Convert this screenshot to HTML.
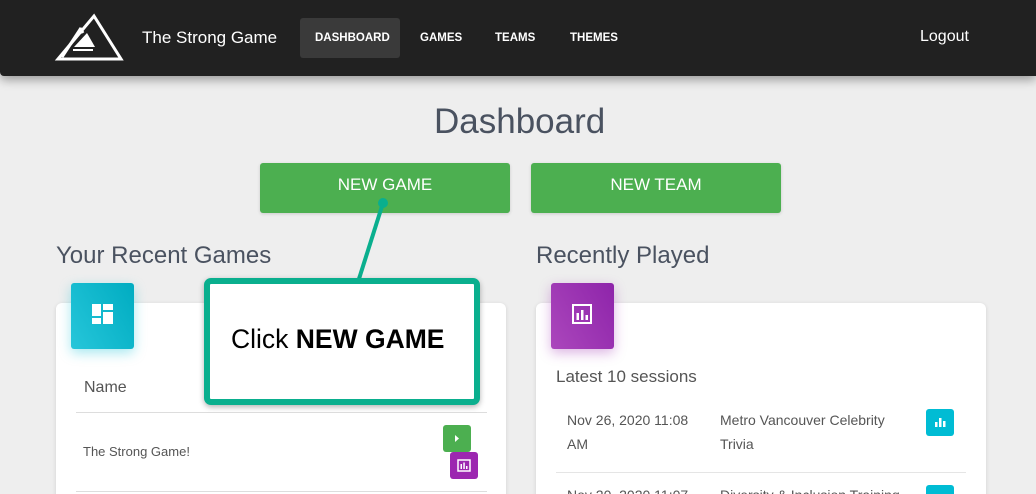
<!DOCTYPE html>
<html><head><meta charset="utf-8"><style>
*{box-sizing:border-box;margin:0;padding:0}
html,body{width:1036px;height:494px;overflow:hidden}
body{background:#eeeeee;font-family:"Liberation Sans",sans-serif;position:relative}
.nav{position:absolute;left:0;top:0;width:1036px;height:76px;background:#212121;box-shadow:0 4px 10px rgba(0,0,0,.35);border-bottom-left-radius:4px}
.nav .t{position:absolute;color:#fff}
.btn{position:absolute;top:163px;width:250px;height:50px;background:#4caf50;border-radius:3px;color:#fff;font-size:17px;text-align:center;line-height:44px;box-shadow:0 1px 3px rgba(0,0,0,.15)}
.h{position:absolute;color:#4a5260;font-size:24px}
.card{position:absolute;top:303px;width:450px;height:200px;background:#fff;border-radius:6px;box-shadow:0 1px 4px rgba(0,0,0,.12)}
.ic{position:absolute;width:63px;height:66px;border-radius:3px}
.sm{position:absolute;width:28px;height:27px;border-radius:3px}
.g{color:#555;position:absolute;font-size:14px;line-height:24px}
</style></head><body>
<div class="nav">
<svg style="position:absolute;left:0;top:0" width="140" height="76">
<polygon points="94,16 121,59 58,59" fill="none" stroke="#fff" stroke-width="3"/>
<line x1="62" y1="57" x2="81" y2="28" stroke="#fff" stroke-width="3"/>
<line x1="80" y1="28" x2="83" y2="33" stroke="#fff" stroke-width="3"/>
<polygon points="87,33 95,47 74,47" fill="#fff"/>
<line x1="73" y1="50" x2="93" y2="50" stroke="#fff" stroke-width="2"/>
</svg>
<div class="t" style="left:142px;top:28px;font-size:17px">The Strong Game</div>
<div style="position:absolute;left:300px;top:18px;width:100px;height:40px;background:#3a3a3a;border-radius:3px"></div>
<div class="t" style="left:315px;top:32px;font-size:11.5px;font-weight:bold">DASHBOARD</div>
<div class="t" style="left:420px;top:32px;font-size:11.5px;font-weight:bold">GAMES</div>
<div class="t" style="left:495px;top:32px;font-size:11.5px;font-weight:bold">TEAMS</div>
<div class="t" style="left:570px;top:32px;font-size:11.5px;font-weight:bold">THEMES</div>
<div class="t" style="left:920px;top:28px;font-size:16px">Logout</div>
</div>
<div class="h" style="left:434px;top:102px;font-size:35px">Dashboard</div>
<div class="btn" style="left:260px">NEW GAME</div>
<div class="btn" style="left:531px">NEW TEAM</div>
<div class="h" style="left:56px;top:242px">Your Recent Games</div>
<div class="h" style="left:536px;top:242px">Recently Played</div>

<div class="card" style="left:56px">
<div style="position:absolute;left:28px;top:76px;font-size:16px;color:#555">Name</div>
<div style="position:absolute;left:20px;top:109px;width:411px;height:1px;background:#ddd"></div>
<div style="position:absolute;left:27px;top:141px;font-size:13px;color:#555">The Strong Game!</div>
<div style="position:absolute;left:20px;top:188px;width:411px;height:1px;background:#ddd"></div>
<div class="sm" style="left:387px;top:122px;background:#4caf50"><svg width="28" height="27"><polygon points="12,10 16,13.5 12,17" fill="#fff"/></svg></div>
<div class="sm" style="left:394px;top:149px;background:#9c27b0"><svg width="28" height="27"><rect x="8" y="8" width="12" height="11" fill="none" stroke="#fff" stroke-width="1.5"/><rect x="10.5" y="12" width="1.5" height="5" fill="#fff"/><rect x="13.3" y="10.5" width="1.5" height="6.5" fill="#fff"/><rect x="16" y="14" width="1.5" height="3" fill="#fff"/></svg></div>
</div>
<div class="ic" style="left:71px;top:283px;background:linear-gradient(60deg,#26c6da,#00acc1);box-shadow:0 4px 12px rgba(0,188,212,.35)"><svg width="63" height="66"><rect x="21" y="21" width="9" height="12" fill="#fff"/><rect x="32" y="21" width="10" height="6" fill="#fff"/><rect x="32" y="29" width="10" height="12" fill="#fff"/><rect x="21" y="35" width="9" height="6" fill="#fff"/></svg></div>

<div class="card" style="left:536px">
<div style="position:absolute;left:20px;top:64px;font-size:17px;color:#555">Latest 10 sessions</div>
<div class="g" style="left:31px;top:105px">Nov 26, 2020 11:08<br>AM</div>
<div class="g" style="left:184px;top:105px">Metro Vancouver Celebrity<br>Trivia</div>
<div class="sm" style="left:390px;top:106px;background:#00bcd4"><svg width="28" height="27"><rect x="9" y="13" width="2.5" height="5" fill="#fff"/><rect x="13" y="9" width="2.5" height="9" fill="#fff"/><rect x="17" y="12" width="2.5" height="6" fill="#fff"/></svg></div>
<div style="position:absolute;left:20px;top:169px;width:410px;height:1px;background:#e5e5e5"></div>
<div class="g" style="left:31px;top:180px">Nov 20, 2020 11:07</div>
<div class="g" style="left:184px;top:180px">Diversity &amp; Inclusion Training</div>
<div class="sm" style="left:390px;top:182px;background:#00bcd4"></div>
</div>
<div class="ic" style="left:551px;top:283px;background:linear-gradient(60deg,#ab47bc,#8e24aa);box-shadow:0 4px 12px rgba(156,39,176,.35)"><svg width="63" height="66"><rect x="22" y="22" width="18" height="18" fill="none" stroke="#fff" stroke-width="2"/><rect x="25.5" y="30" width="2.5" height="7" fill="#fff"/><rect x="30" y="27" width="2.5" height="10" fill="#fff"/><rect x="34.5" y="32" width="2.5" height="5" fill="#fff"/></svg></div>

<svg style="position:absolute;left:0;top:0" width="1036" height="494">
<line x1="383" y1="203" x2="358" y2="282" stroke="#0aaf8e" stroke-width="4"/>
<circle cx="383" cy="203" r="5" fill="#0aaf8e"/>
</svg>
<div style="position:absolute;left:204px;top:278px;width:276px;height:127px;background:#fff;border:6px solid #0aaf8e;border-radius:7px;box-shadow:0 2px 6px rgba(0,0,0,.3)">
<div style="position:absolute;left:21px;top:40px;font-size:26.5px;color:#000;white-space:nowrap">Click <b>NEW GAME</b></div>
</div>
</body></html>
